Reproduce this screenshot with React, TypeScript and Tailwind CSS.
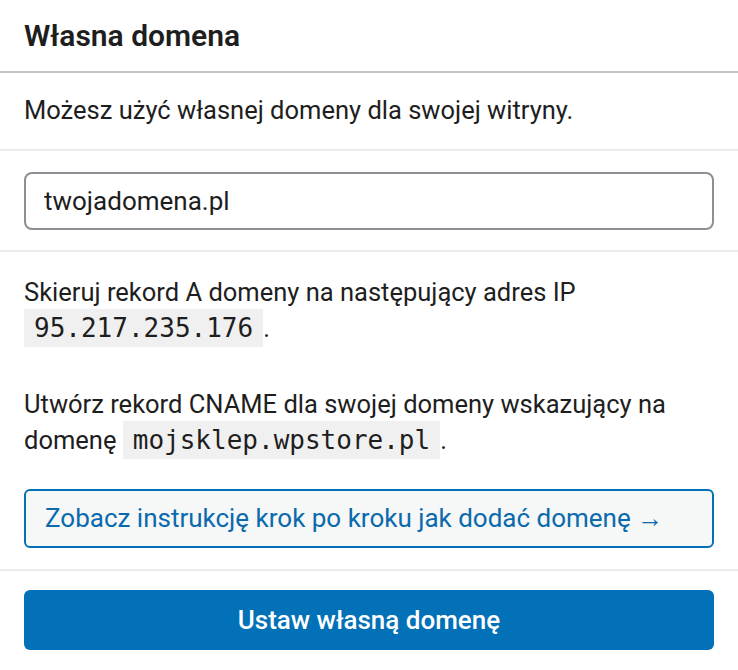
import React from "react";

const Code = ({ children }: { children: React.ReactNode }) => (
  <code className="bg-[#f0f0f0] px-[10px] py-[4px] font-['DejaVu_Sans_Mono',monospace] text-[26px] text-[#1e1e1e]">
    {children}
  </code>
);

const App = () => {
  return (
    <div className="w-[738px] h-[670px] bg-white font-['Roboto',sans-serif] text-[#1e1e1e]">
      <div className="h-[73px] flex items-center px-[24px] border-b-2 border-[#c4c4c8]">
        <h2 className="text-[30px] font-semibold leading-none">Własna domena</h2>
      </div>
      <div className="h-[78px] flex items-center px-[24px] border-b-2 border-[#ececec]">
        <p className="text-[25.5px] leading-none">
          Możesz użyć własnej domeny dla swojej witryny.
        </p>
      </div>
      <div className="px-[24px] pt-[21px] pb-[20px] border-b-2 border-[#ececec]">
        <input
          type="text"
          defaultValue="twojadomena.pl"
          className="w-full h-[58px] rounded-[8px] border-2 border-[#8c8f94] px-[18px] text-[26px] text-[#1e1e1e] outline-none"
        />
      </div>
      <div className="px-[24px] pt-[22px] pb-[21px] border-b-2 border-[#ececec]">
        <p className="text-[25.5px] leading-[36px]">
          Skieruj rekord A domeny na następujący adres IP <Code>95.217.235.176</Code>.
        </p>
        <p className="text-[25.5px] leading-[36px] mt-[40px]">
          Utwórz rekord CNAME dla swojej domeny wskazujący na domenę{" "}
          <Code>mojsklep.wpstore.pl</Code>.
        </p>
        <button className="mt-[31px] w-full h-[59px] rounded-[6px] border-2 border-[#0271b6] bg-[#f6f7f7] text-[#0a6aad] text-[26px] text-left px-[19px] whitespace-nowrap">
          Zobacz instrukcję krok po kroku jak dodać domenę →
        </button>
      </div>
      <div className="px-[24px] pt-[19px]">
        <button className="w-full h-[60px] rounded-[6px] bg-[#0271b7] text-white text-[26px] font-medium">
          Ustaw własną domenę
        </button>
      </div>
    </div>
  );
};

export default App;
